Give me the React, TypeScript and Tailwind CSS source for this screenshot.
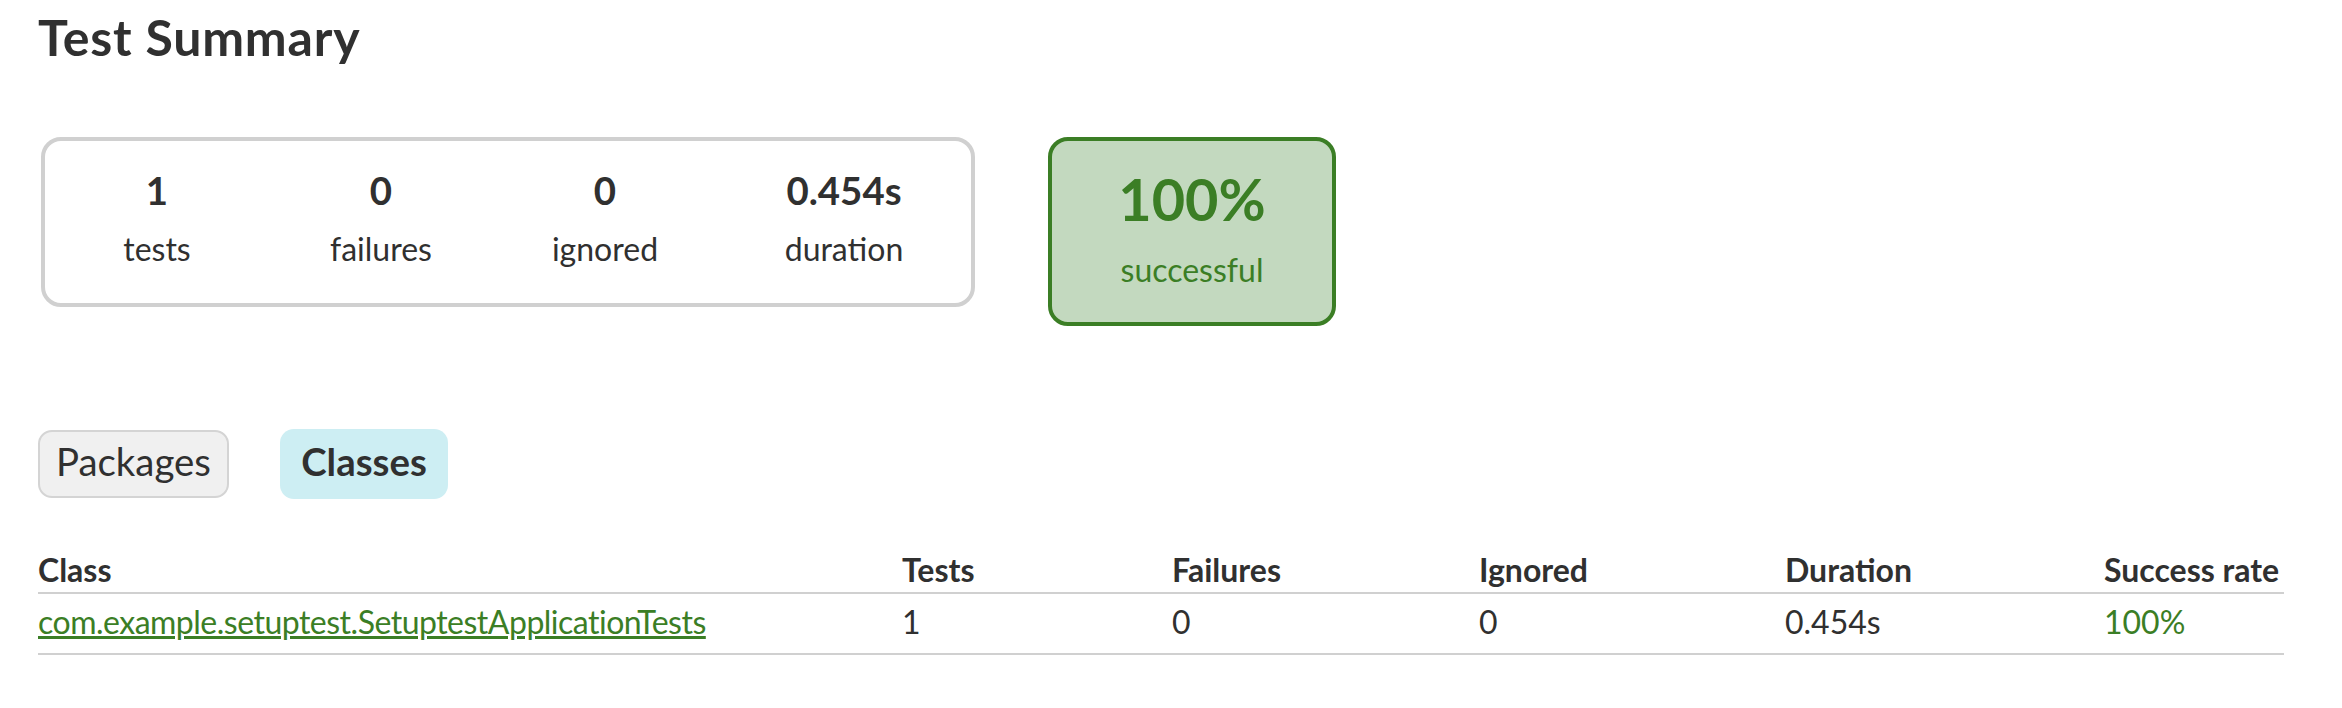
const STATS = [
  { value: "1", label: "tests", width: "w-[224px]" },
  { value: "0", label: "failures", width: "w-[224px]" },
  { value: "0", label: "ignored", width: "w-[224px]" },
  { value: "0.454s", label: "duration", width: "w-[254px]" },
];

const COLS = "grid grid-cols-[864px_270px_307px_306px_319px_180px]";

function SummaryBox() {
  return (
    <div className="ml-[3px] flex w-[934px] rounded-[20px] border-4 border-[#d0d0d0]">
      {STATS.map((s) => (
        <div key={s.label} className={`${s.width} pt-[26px] pb-[35px] text-center`}>
          <div className="text-[38.4px] font-bold leading-[46px]">{s.value}</div>
          <div className="mt-[17px] leading-[38px]">{s.label}</div>
        </div>
      ))}
    </div>
  );
}

function SuccessBox() {
  return (
    <div className="ml-[73px] w-[288px] rounded-[20px] border-4 border-[#3b7e25] bg-[#c3d9bf] pt-[23px] pb-[33px] text-center text-[#3b7e25]">
      <div className="text-[57.6px] font-bold leading-[69px]">100%</div>
      <div className="mt-[18px] leading-[38px]">successful</div>
    </div>
  );
}

function Tabs() {
  return (
    <div className="mt-[104px] flex items-start gap-[51px] text-[38.4px] leading-[46px]">
      <div className="flex h-[68px] w-[191px] justify-center rounded-[14px] border-2 border-[#d4d4d4] bg-[#f0f0f0] pt-[6px]">
        Packages
      </div>
      <div className="-mt-px flex h-[70px] w-[168px] justify-center rounded-[14px] bg-[#cdeef3] pt-[9px] font-bold">
        Classes
      </div>
    </div>
  );
}

function ClassTable() {
  return (
    <div className="mt-[52px] w-[2246px] leading-[38px]">
      <div className={`${COLS} h-[43px] border-b-2 border-[#d0d0d0] font-bold`}>
        <div>Class</div>
        <div>Tests</div>
        <div>Failures</div>
        <div>Ignored</div>
        <div>Duration</div>
        <div>Success rate</div>
      </div>
      <div className={`${COLS} border-b-2 border-[#d0d0d0] pt-[9px] pb-[12px]`}>
        <div>
          <a href="#" className="tracking-[-0.5px] text-[#3b7e25] underline">
            com.example.setuptest.SetuptestApplicationTests
          </a>
        </div>
        <div>1</div>
        <div>0</div>
        <div>0</div>
        <div>0.454s</div>
        <div className="text-[#3b7e25]">100%</div>
      </div>
    </div>
  );
}

export default function App() {
  return (
    <div className="min-h-[708px] bg-white pt-[7px] pl-[38px] font-[Lato,sans-serif] text-[32px] text-[#303030]">
      <h1 className="text-[50px] font-bold leading-[60px] tracking-[0.8px]">Test Summary</h1>
      <div className="mt-[70px] flex items-start">
        <SummaryBox />
        <SuccessBox />
      </div>
      <Tabs />
      <ClassTable />
    </div>
  );
}
